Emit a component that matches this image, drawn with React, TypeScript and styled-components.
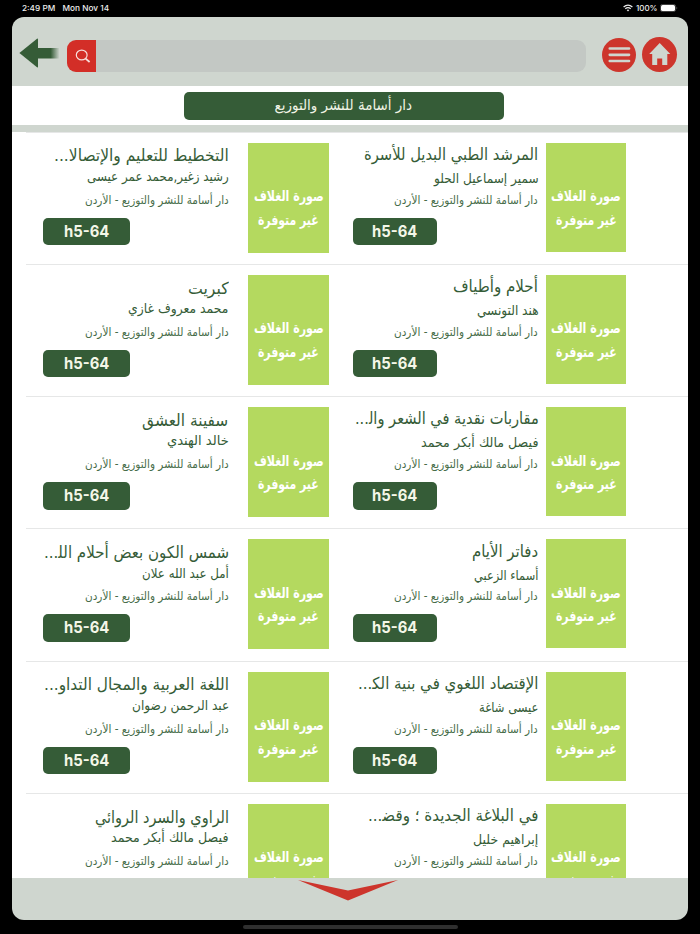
import React, { useLayoutEffect, useRef, useState } from 'react';
import styled, { createGlobalStyle } from 'styled-components';

const GREEN = '#355c37';
const RED = '#cd352c';
const SAGE = '#cfd6cf';
const ARABIC = '"DejaVu Sans", sans-serif';

const Global = createGlobalStyle`
  * { box-sizing: border-box; }
  html, body { margin: 0; background: #000; }
`;

const Device = styled.div`
  width: 700px;
  height: 934px;
  background: #000;
  display: flex;
  flex-direction: column;
  align-items: center;
  overflow: hidden;
  font-family: ${ARABIC};
`;

const StatusBar = styled.div`
  width: 100%;
  height: 16.5px;
  flex: none;
  display: flex;
  justify-content: space-between;
  align-items: center;
  padding: 0 22px 0 22px;
  color: #eee;
  font: 500 8px/16px Inter, sans-serif;
`;

const StatusGroup = styled.div<{ $gap: number }>`
  display: flex;
  align-items: center;
  gap: ${(p) => p.$gap}px;
`;

const Screen = styled.div`
  width: 676.5px;
  height: 903px;
  flex: none;
  border-radius: 12px;
  overflow: hidden;
  background: ${SAGE};
  display: flex;
  flex-direction: column;
`;

const Header = styled.header`
  height: 69.5px;
  flex: none;
  display: flex;
  align-items: flex-start;
  padding: 19.5px 11px 0 7.5px;
`;

const ArrowIcon = styled.svg`
  width: 41px;
  height: 34px;
  flex: none;
`;

const SearchBox = styled.div`
  width: 519px;
  height: 32px;
  margin: 3.5px 0 0 7px;
  border-radius: 9px;
  overflow: hidden;
  background: #c3c8c4;
  display: flex;
`;

const SearchButton = styled.div`
  width: 28.5px;
  background: #d32e27;
  display: flex;
  align-items: center;
  justify-content: center;
  padding-left: 3px;
`;

const RoundButton = styled.div<{ $size: number; $left: number; $top: number }>`
  width: ${(p) => p.$size}px;
  height: ${(p) => p.$size}px;
  margin: ${(p) => p.$top}px 0 0 ${(p) => p.$left}px;
  flex: none;
  border-radius: 50%;
  background: ${RED};
  svg { display: block; width: 100%; height: 100%; }
`;

const TitleBar = styled.div`
  height: 39px;
  flex: none;
  background: #fff;
  display: flex;
  justify-content: center;
  padding: 5.5px 12.5px 0 0;
`;

const TitlePill = styled.div`
  width: 319.5px;
  height: 28.5px;
  border-radius: 5px;
  background: ${GREEN};
  color: #f1f4e6;
  display: flex;
  justify-content: center;
  font-size: 14.5px;
  line-height: 27px;
`;

const Divider = styled.div`
  height: 6.5px;
  flex: none;
`;

const List = styled.main`
  flex: none;
  height: 746.5px;
  overflow: hidden;
  background: #fff;
`;

const Row = styled.div`
  height: 132.25px;
  margin-left: 14px;
  border-top: 1px solid #e6e7e7;
  display: grid;
  grid-template-columns: 203.5px 99.5px 217px 80.5px;
  padding-top: 10px;
`;

type Side = 'left' | 'right';

const Info = styled.div`
  display: flex;
  flex-direction: column;
  color: ${GREEN};
`;

const InfoBody = styled.div<{ $side: Side }>`
  display: flex;
  flex-direction: column;
  align-items: flex-end;
  height: 75px;
  padding-right: ${(p) => (p.$side === 'left' ? 0.5 : 7.5)}px;
`;

const BookTitle = styled.div<{ $side: Side }>`
  height: 22px;
  margin-top: ${(p) => (p.$side === 'left' ? 2.8 : 1.3)}px;
  font-size: 16.5px;
  line-height: 22px;
`;

const Author = styled.div<{ $side: Side }>`
  height: 18px;
  margin-top: ${(p) => (p.$side === 'left' ? -0.5 : 3)}px;
  font-size: 13.5px;
  line-height: 18px;
`;

const Publisher = styled.div<{ $side: Side }>`
  height: 18px;
  margin-top: ${(p) => (p.$side === 'left' ? 5.8 : 3.8)}px;
  font-size: 11.5px;
  line-height: 18px;
  color: #476d49;
`;

const CodeBadge = styled.div<{ $side: Side }>`
  width: ${(p) => (p.$side === 'left' ? 86.5 : 84.5)}px;
  height: 27.5px;
  margin-left: ${(p) => (p.$side === 'left' ? 17.5 : 24)}px;
  border-radius: 5px;
  background: ${GREEN};
  color: #f4f7e8;
  font: 700 15.5px/27.5px Inter, sans-serif;
  display: flex;
  justify-content: center;
`;

const Cover = styled.div<{ $side: Side }>`
  margin-left: ${(p) => (p.$side === 'left' ? 19 : 0)}px;
  width: 80.5px;
  height: ${(p) => (p.$side === 'left' ? 110 : 109)}px;
  background: #b4d95f;
  color: #fff;
  display: flex;
  flex-direction: column;
  align-items: center;
  padding-top: 42.5px;
  font-weight: 700;
  font-size: 15px;
  line-height: 23.5px;
`;

const Footer = styled.footer`
  flex: 1;
  display: flex;
  justify-content: center;
  padding: 2px 4px 0 0;
`;

const HomeIndicator = styled.div`
  width: 215px;
  height: 4px;
  margin-top: 5px;
  border-radius: 2px;
  background: #2f2f2f;
`;

const FitBox = styled.div`
  display: flex;
  flex: none;
  justify-content: flex-end;
`;

const FitText = styled.span`
  white-space: nowrap;
  flex: none;
  transform-origin: right center;
`;

/* Draws one line of text condensed or expanded to a given width. */
function Fit({ width, children, dir = 'rtl' }: { width: number; children: string; dir?: 'rtl' | 'ltr' }) {
  const ref = useRef<HTMLSpanElement>(null);
  const [scale, setScale] = useState(1);
  useLayoutEffect(() => {
    if (ref.current) setScale(width / ref.current.offsetWidth);
  }, [width, children]);
  return (
    <FitBox style={{ width }}>
      <FitText ref={ref} dir={dir} style={{ transform: `scaleX(${scale})` }}>
        {children}
      </FitText>
    </FitBox>
  );
}

type Book = { title: string; titleW: number; author: string; authorW: number };

const rows: { left: Book; right: Book }[] = [
  {
    left: { title: 'التخطيط للتعليم والإتصالا...', titleW: 175, author: 'رشيد زغير,محمد عمر عيسى', authorW: 142 },
    right: { title: 'المرشد الطبي البديل للأسرة', titleW: 174, author: 'سمير إسماعيل الحلو', authorW: 105 },
  },
  {
    left: { title: 'كبريت', titleW: 41, author: 'محمد معروف غازي', authorW: 100 },
    right: { title: 'أحلام وأطياف', titleW: 85, author: 'هند التونسي', authorW: 62 },
  },
  {
    left: { title: 'سفينة العشق', titleW: 86, author: 'خالد الهندي', authorW: 62 },
    right: { title: 'مقاربات نقدية في الشعر وال\u200d...', titleW: 184, author: 'فيصل مالك أبكر محمد', authorW: 117 },
  },
  {
    left: { title: 'شمس الكون بعض أحلام الل\u200d...', titleW: 185, author: 'أمل عبد الله علان', authorW: 87 },
    right: { title: 'دفاتر الأيام', titleW: 66, author: 'أسماء الزعبي', authorW: 64 },
  },
  {
    left: { title: 'اللغة العربية والمجال التداو...', titleW: 185, author: 'عبد الرحمن رضوان', authorW: 97 },
    right: { title: 'الإقتصاد اللغوي في بنية الك\u200d...', titleW: 181, author: 'عيسى شاغة', authorW: 59 },
  },
  {
    left: { title: 'الراوي والسرد الروائي', titleW: 134, author: 'فيصل مالك أبكر محمد', authorW: 117 },
    right: { title: 'في البلاغة الجديدة ؛ وقض\u200d...', titleW: 171, author: 'إبراهيم خليل', authorW: 65 },
  },
];

function BookCell({ book, side }: { book: Book; side: Side }) {
  return (
    <>
      <Info>
        <InfoBody $side={side}>
          <BookTitle $side={side}><Fit width={book.titleW}>{book.title}</Fit></BookTitle>
          <Author $side={side}><Fit width={book.authorW}>{book.author}</Fit></Author>
          <Publisher $side={side}><Fit width={144}>دار أسامة للنشر والتوزيع - الأردن</Fit></Publisher>
        </InfoBody>
        <CodeBadge $side={side}><Fit width={45} dir="ltr">h5-64</Fit></CodeBadge>
      </Info>
      <Cover $side={side}>
        <Fit width={70}>صورة الغلاف</Fit>
        <Fit width={61}>غير متوفرة</Fit>
      </Cover>
    </>
  );
}

export default function App() {
  return (
    <>
      <Global />
      <Device>
        <StatusBar>
          <StatusGroup $gap={8}>
            <Fit width={33} dir="ltr">2:49 PM</Fit>
            <Fit width={46.5} dir="ltr">Mon Nov 14</Fit>
          </StatusGroup>
          <StatusGroup $gap={2.5}>
            <svg width="10" height="8" viewBox="0 0 10 8" fill="none" stroke="#eee" strokeWidth="1.3">
              <path d="M.6 3Q5-.8 9.4 3M2.3 4.7Q5 2.5 7.7 4.7" />
              <path d="M3.7 6Q5 5 6.3 6L5 7.4Z" fill="#eee" stroke="none" />
            </svg>
            <Fit width={22} dir="ltr">100%</Fit>
            <svg width="18" height="8" viewBox="0 0 18 8">
              <rect x=".3" y=".4" width="15.4" height="7.2" rx="2.2" fill="none" stroke="#777" strokeWidth=".6" />
              <rect x="1" y="1" width="14" height="6" rx="1.5" fill="#fff" />
              <path d="M16.6 2.8Q18 4 16.6 5.2Z" fill="#888" />
            </svg>
          </StatusGroup>
        </StatusBar>
        <Screen>
          <Header>
            <ArrowIcon viewBox="0 0 41 34">
              <defs>
                <linearGradient id="tail" x1="0" x2="1">
                  <stop offset="0" stopColor={GREEN} />
                  <stop offset=".6" stopColor={GREEN} />
                  <stop offset="1" stopColor={GREEN} stopOpacity="0" />
                </linearGradient>
              </defs>
              <path d="M.4 17 18 2.7Q19 2.3 19 3.5V30.5Q19 31.8 18 31.2Z" fill={GREEN} />
              <rect x="18.5" y="12" width="22" height="10.5" fill="url(#tail)" />
            </ArrowIcon>
            <SearchBox>
              <SearchButton>
                <svg width="16" height="14" viewBox="0 0 16 14" fill="none" stroke="#f7dedb" strokeWidth="1.2">
                  <ellipse cx="6.7" cy="6" rx="5.4" ry="4.9" />
                  <path d="M10.6 9.6 14.6 13" strokeWidth="1.8" />
                </svg>
              </SearchButton>
            </SearchBox>
            <RoundButton $size={34.5} $left={15.5} $top={1.5}>
              <svg viewBox="0 0 34.5 34.5" stroke={SAGE} strokeWidth="2.7" strokeLinecap="round">
                <path d="M7.8 10.5H27M7.8 16.8H27M7.8 23H27" />
              </svg>
            </RoundButton>
            <RoundButton $size={35.5} $left={5.5} $top={0.5}>
              <svg viewBox="0 0 35.5 35.5" fill={SAGE}>
                <path d="M17.7 6 28.3 17H25.3V28H20.2V21.5H15.2V28H10.2V17H7.2Z" />
              </svg>
            </RoundButton>
          </Header>
          <TitleBar>
            <TitlePill><Fit width={137.5}>دار أسامة للنشر والتوزيع</Fit></TitlePill>
          </TitleBar>
          <Divider />
          <List>
            {rows.map((row, i) => (
              <Row key={i}>
                <BookCell book={row.left} side="left" />
                <BookCell book={row.right} side="right" />
              </Row>
            ))}
          </List>
          <Footer>
            <svg width="100" height="21" viewBox="0 0 100 21">
              <path d="M0 0 50 10.5 100 0 50 20.5Z" fill={RED} />
            </svg>
          </Footer>
        </Screen>
        <HomeIndicator />
      </Device>
    </>
  );
}
